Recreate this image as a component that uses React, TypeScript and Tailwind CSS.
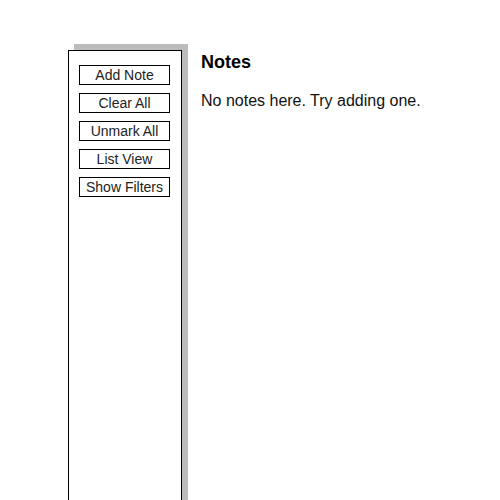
import React from 'react';

const actions = ['Add Note', 'Clear All', 'Unmark All', 'List View', 'Show Filters'];

const App: React.FC = () => {
  return (
    <div className="flex h-[500px] overflow-hidden bg-white pl-[68px] pt-[50px] font-['Liberation_Sans',Arial,sans-serif] text-black">
      {/* Sidebar */}
      <div className="flex h-[470px] w-[114px] shrink-0 flex-col items-start gap-2 border border-black bg-white pl-[10px] pt-[14px] shadow-[6px_-6px_0_#bcbcbc]">
        {actions.map((label) => (
          <button
            key={label}
            className="h-5 w-[91px] border border-black bg-white text-[14px] leading-none text-[#222]"
          >
            {label}
          </button>
        ))}
      </div>

      {/* Main */}
      <div className="pl-[19px]">
        <h1 className="mt-[1px] text-[18px] font-bold leading-[22px]">Notes</h1>
        <p className="mt-[18px] text-[16px] leading-[20px] text-[#111]">
          No notes here. Try adding one.
        </p>
      </div>
    </div>
  );
};

export default App;
